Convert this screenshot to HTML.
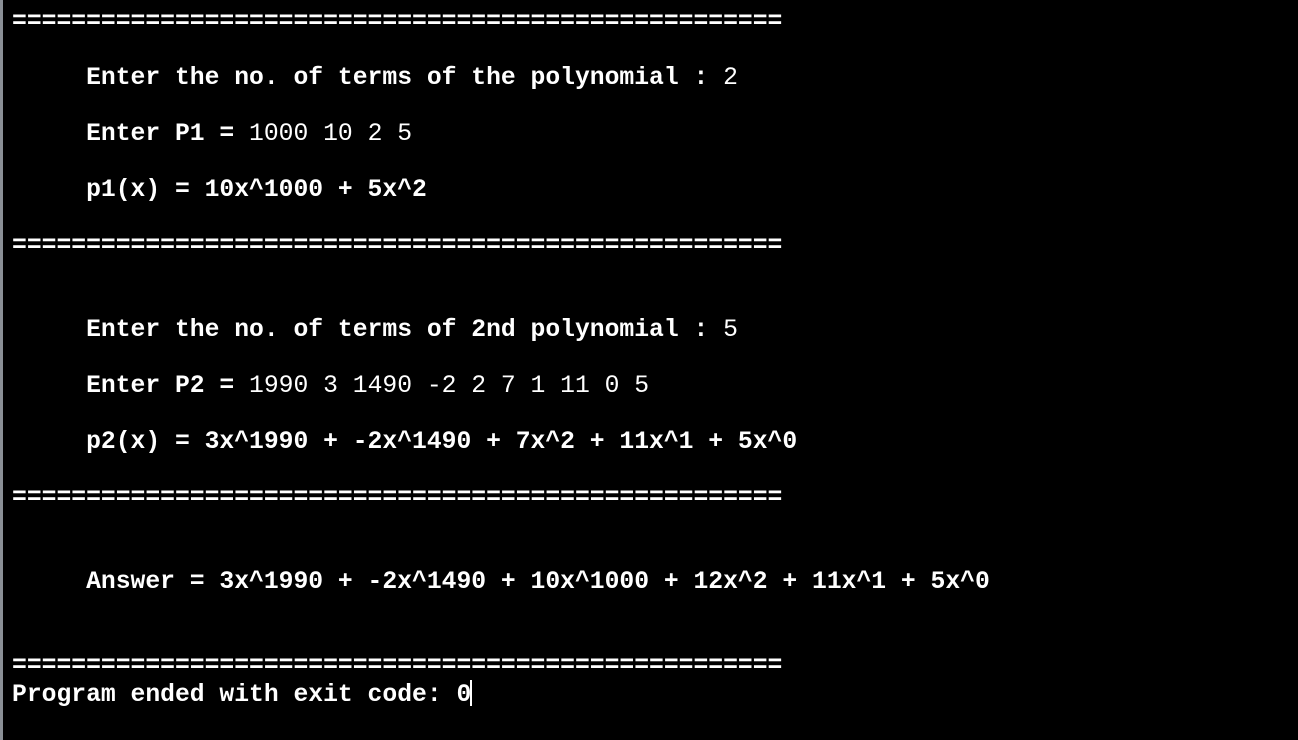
<!DOCTYPE html>
<html><head><meta charset="utf-8"><style>
html,body{margin:0;padding:0;background:#000;width:1298px;height:740px;overflow:hidden}
.l{position:absolute;left:0;top:0;width:3px;height:740px;background:#8a8f96}
pre{position:absolute;left:12px;top:8px;margin:0;font-family:"Liberation Mono",monospace;font-size:24.7px;line-height:28px;color:#fff;font-weight:bold;white-space:pre}
.n{font-weight:normal}
.c{display:inline-block;width:2px;height:26px;background:#fff;vertical-align:-5px;margin-left:-1px}
</style></head><body><div class="l"></div><pre>====================================================

     Enter the no. of terms of the polynomial : <span class="n">2</span>

     Enter P1 = <span class="n">1000 10 2 5</span>

     p1(x) = 10x^1000 + 5x^2

====================================================


     Enter the no. of terms of 2nd polynomial : <span class="n">5</span>

     Enter P2 = <span class="n">1990 3 1490 -2 2 7 1 11 0 5</span>

     p2(x) = 3x^1990 + -2x^1490 + 7x^2 + 11x^1 + 5x^0

====================================================


     Answer = 3x^1990 + -2x^1490 + 10x^1000 + 12x^2 + 11x^1 + 5x^0


====================================================
Program ended with exit code: 0<span class="c"></span></pre></body></html>
